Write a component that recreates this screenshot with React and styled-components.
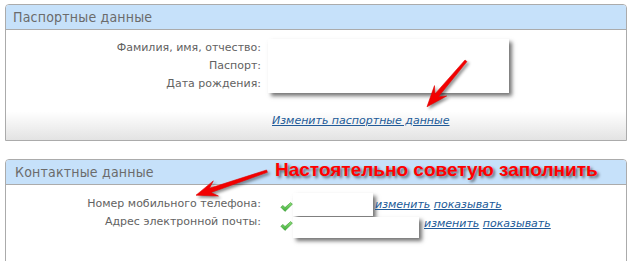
import React from "react";
import styled, { createGlobalStyle } from "styled-components";

const Global = createGlobalStyle`
  html, body { margin: 0; padding: 0; background: #fff; }
  body { font-family: "DejaVu Sans", Verdana, sans-serif; }
`;

const Page = styled.div`
  position: relative;
  padding: 4px 4px 0 5px;
  width: 631px;
  height: 261px;
  box-sizing: border-box;
  overflow: hidden;
`;

const Panel = styled.section`
  border: 1px solid #ababab;
  border-radius: 4px 4px 0 0;
  background: #fff;
  margin-top: ${(p) => p.$gap || 0}px;
`;

const Header = styled.div`
  height: 24px;
  line-height: 24px;
  background: #c6e1fa;
  border-bottom: 1px solid #ababab;
  border-radius: 3px 3px 0 0;
  padding-left: ${(p) => p.$pl || 7}px;
  font-family: "DejaVu Sans Condensed", "DejaVu Sans", Verdana, sans-serif;
  font-stretch: condensed;
  font-size: 14px;
  letter-spacing: 0.2px;
  color: #6b6b6b;
`;

const Body = styled.div`
  display: grid;
  grid-template-columns: 255px 1fr;
  column-gap: 7px;
  grid-auto-rows: 18px;
  align-content: start;
  padding: ${(p) => p.$pad};
  height: ${(p) => p.$h}px;
  box-sizing: border-box;
  background: ${(p) =>
    p.$fade ? "linear-gradient(to bottom, #fff 0%, #fff 74%, #e3e3e3 100%)" : "#fff"};
`;

const Label = styled.div`
  grid-column: 1;
  text-align: right;
  font-size: 11px;
  line-height: 18px;
  color: #626262;
  white-space: nowrap;
`;

const Redacted = styled.div`
  background: #fff;
  width: ${(p) => p.$w}px;
  height: ${(p) => p.$h}px;
  box-shadow: 3px 3px 4px rgba(0, 0, 0, 0.55);
  flex: none;
  position: relative;
  z-index: 1;
`;

const SpanBox = styled.div`
  grid-column: 2;
  grid-row: 1 / span 3;
`;

const LinkRow = styled.div`
  grid-column: 2;
  grid-row: 4;
  margin-top: 19px;
  padding-left: 4px;
  font-size: 11px;
  line-height: 18px;
`;

const Link = styled.a`
  font-style: italic;
  color: #215a98;
  text-decoration: underline;
  font-size: 11px;
  cursor: pointer;
`;

const ValueCell = styled.div`
  grid-column: 2;
  display: flex;
  align-items: center;
  height: 18px;
  font-size: 11px;
  white-space: nowrap;
`;

const Check = styled.svg`
  width: 13px;
  height: 10px;
  margin-left: 12px;
  flex: none;
  position: relative;
  top: ${(p) => p.$dy}px;
`;

const Shifted = styled.div`
  display: flex;
  align-items: center;
  transform: translateY(${(p) => p.$dy}px);
`;

const Links = styled.span`
  margin-left: ${(p) => p.$ml}px;
  transform: translateY(${(p) => p.$dy}px);
`;

const Shout = styled.div`
  position: absolute;
  left: 275px;
  top: 158px;
  font-family: "Liberation Sans", Arial, sans-serif;
  font-weight: bold;
  font-size: 19px;
  line-height: 24px;
  color: #ff0000;
  text-shadow: 2px 2px 3px rgba(0, 0, 0, 0.55);
  white-space: nowrap;
  z-index: 5;
`;

const ArrowSvg = styled.svg`
  position: absolute;
  overflow: visible;
  z-index: 5;
  pointer-events: none;
  filter: drop-shadow(2px 2px 1.5px rgba(0, 0, 0, 0.45));
`;

function Arrow({ from, to }) {
  const [tx, ty] = from;
  const [px, py] = to;
  const dx = px - tx;
  const dy = py - ty;
  const len = Math.hypot(dx, dy);
  const ux = dx / len;
  const uy = dy / len;
  const nx = -uy;
  const ny = ux;
  const L = 21;
  const W = 16;
  const w0 = 2.5;
  const w1 = 4.5;
  const bx = px - ux * L;
  const by = py - uy * L;
  const nbx = bx + ux * 6;
  const nby = by + uy * 6;
  const pts = [
    [tx + nx * w0 / 2, ty + ny * w0 / 2],
    [nbx + nx * w1 / 2, nby + ny * w1 / 2],
    [bx + nx * W / 2, by + ny * W / 2],
    [px, py],
    [bx - nx * W / 2, by - ny * W / 2],
    [nbx - nx * w1 / 2, nby - ny * w1 / 2],
    [tx - nx * w0 / 2, ty - ny * w0 / 2],
  ];
  const minX = Math.min(...pts.map((p) => p[0])) - 2;
  const minY = Math.min(...pts.map((p) => p[1])) - 2;
  const maxX = Math.max(...pts.map((p) => p[0])) + 2;
  const maxY = Math.max(...pts.map((p) => p[1])) + 2;
  const d = pts.map((p) => `${(p[0] - minX).toFixed(2)},${(p[1] - minY).toFixed(2)}`).join(" ");
  return (
    <ArrowSvg
      style={{ left: minX, top: minY }}
      width={maxX - minX}
      height={maxY - minY}
      viewBox={`0 0 ${maxX - minX} ${maxY - minY}`}
    >
      <polygon points={d} fill="#f20000" strokeLinejoin="round" stroke="#e00000" strokeWidth="0.6" />
    </ArrowSvg>
  );
}

function CheckIcon({ dy }) {
  return (
    <Check $dy={dy} viewBox="0 0 13 10">
      <defs>
        <linearGradient id="cg" x1="0" y1="0" x2="0" y2="1">
          <stop offset="0" stopColor="#8fe07a" />
          <stop offset="1" stopColor="#3fae3a" />
        </linearGradient>
      </defs>
      <path
        d="M0.8 5.2 L3 3.4 L5 5.6 L10.6 0.6 L12.4 2.2 L5 9.4 Z"
        fill="url(#cg)"
        stroke="#3c9a36"
        strokeWidth="0.6"
        strokeLinejoin="round"
      />
    </Check>
  );
}

export default function App() {
  return (
    <>
      <Global />
      <Page>
        <Panel>
          <Header>Паспортные данные</Header>
          <Body $pad="9px 0 10px 0" $h={110} $fade>
            <Label style={{ gridRow: 1 }}>Фамилия, имя, отчество:</Label>
            <Label style={{ gridRow: 2 }}>Паспорт:</Label>
            <Label style={{ gridRow: 3 }}>Дата рождения:</Label>
            <SpanBox>
              <Redacted $w={241} $h={54} />
            </SpanBox>
            <LinkRow>
              <Link>Изменить паспортные данные</Link>
            </LinkRow>
          </Body>
        </Panel>

        <Panel $gap={18}>
          <Header $pl={9}>Контактные данные</Header>
          <Body $pad="10px 0 0 0" $h={120}>
            <Label style={{ gridRow: 1 }}>Номер мобильного телефона:</Label>
            <ValueCell style={{ gridRow: 1 }}>
              <CheckIcon dy={3} />
              <Shifted $dy={0}>
                <Redacted $w={80} $h={23} />
              </Shifted>
              <Links $ml={2} $dy={0}>
                <Link>изменить</Link> <Link>показывать</Link>
              </Links>
            </ValueCell>
            <Label style={{ gridRow: 2 }}>Адрес электронной почты:</Label>
            <ValueCell style={{ gridRow: 2 }}>
              <CheckIcon dy={4} />
              <Shifted $dy={5}>
                <Redacted $w={126} $h={21} />
              </Shifted>
              <Links $ml={5} $dy={1}>
                <Link>изменить</Link> <Link>показывать</Link>
              </Links>
            </ValueCell>
          </Body>
        </Panel>

        <Shout>Настоятельно советую заполнить</Shout>
        <Arrow from={[466, 61]} to={[427, 107]} />
        <Arrow from={[267, 171]} to={[196, 195]} />
      </Page>
    </>
  );
}
